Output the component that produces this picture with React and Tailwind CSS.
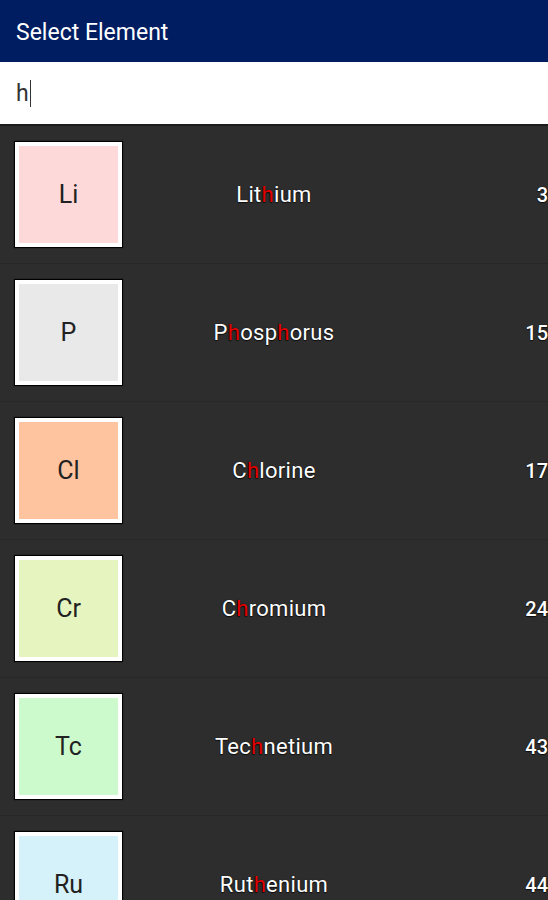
import React from 'react';

const elements = [
  { symbol: 'Li', name: 'Lithium', number: 3, color: 'bg-[#fdd9d9]' },
  { symbol: 'P', name: 'Phosphorus', number: 15, color: 'bg-[#e9e9e9]' },
  { symbol: 'Cl', name: 'Chlorine', number: 17, color: 'bg-[#fec4a0]' },
  { symbol: 'Cr', name: 'Chromium', number: 24, color: 'bg-[#e6f5c0]' },
  { symbol: 'Tc', name: 'Technetium', number: 43, color: 'bg-[#cdfacc]' },
  { symbol: 'Ru', name: 'Ruthenium', number: 44, color: 'bg-[#d5f1f9]' },
];

// highlight every match of the query in red
const Highlighted = ({ text, query }) => {
  const parts = text.split(new RegExp(`(${query})`, 'gi'));
  return (
    <>
      {parts.map((p, i) =>
        p.toLowerCase() === query.toLowerCase() ? (
          <span key={i} className="text-[#e00000]">{p}</span>
        ) : (
          <span key={i}>{p}</span>
        )
      )}
    </>
  );
};

const App = () => {
  const query = 'h';

  return (
    <div
      className="w-[548px] h-[900px] overflow-hidden bg-[#2d2d2d] flex flex-col"
      style={{ fontFamily: 'Roboto, "Liberation Sans", sans-serif' }}
    >
      <div className="h-[62px] bg-[#001d62] flex items-center px-4 shrink-0">
        <span className="text-white text-[23px] leading-none pt-[3px]">Select Element</span>
      </div>

      <div className="h-[64px] bg-white flex items-center px-4 shrink-0 border-b-2 border-[#1c1c1c]">
        <span className="text-[#333] text-[23px] leading-none">{query}</span>
        <span className="w-px h-[27px] bg-[#333] ml-px" />
      </div>

      <div className="flex flex-col">
        {elements.map(el => (
          <div key={el.symbol} className="h-[138px] shrink-0 flex items-center border-b border-[#272727]">
            <div className="w-[137px] shrink-0 pl-[14px]">
              <div className={`w-[109px] h-[107px] border border-black shadow-[0_0_1px_rgba(0,0,0,0.8)] ${el.color} outline-4 outline-white -outline-offset-[5px] flex items-center justify-center`}>
                <span className="text-[25px] text-[#222]">{el.symbol}</span>
              </div>
            </div>
            <div className="flex-1 text-center text-white text-[22px] tracking-[0.3px] [text-shadow:0_0_1px_#000,0_1px_1px_rgba(0,0,0,0.7)]">
              <Highlighted text={el.name} query={query} />
            </div>
            <div className="w-[137px] shrink-0 text-right text-white text-[20px] font-medium [text-shadow:0_0_1px_#000,0_1px_1px_rgba(0,0,0,0.7)]">
              {el.number}
            </div>
          </div>
        ))}
      </div>
    </div>
  );
};

export default App;
